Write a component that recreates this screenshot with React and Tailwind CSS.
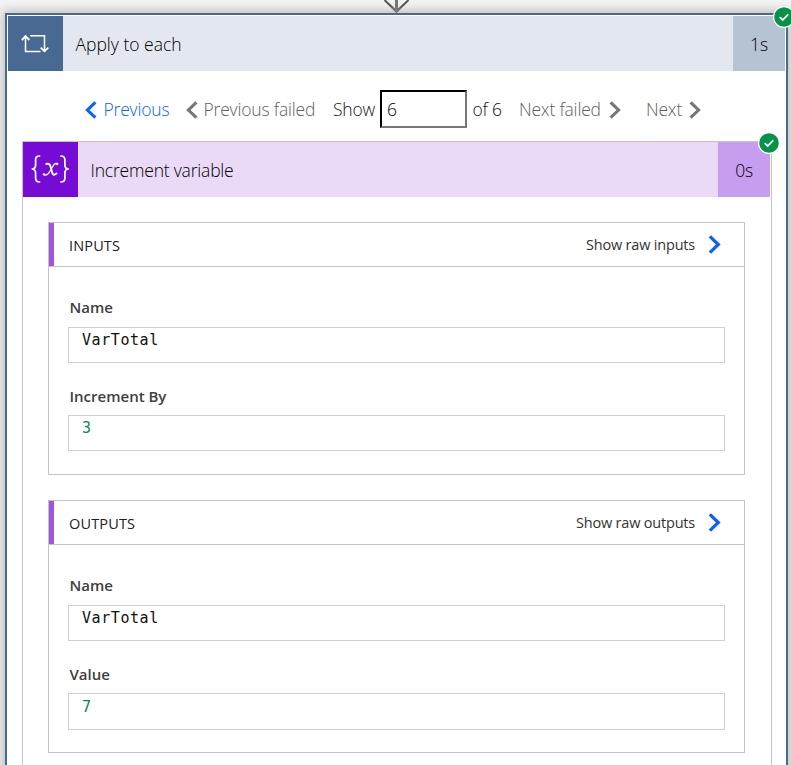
function Chevron({ left, className }) {
  return (
    <svg viewBox="0 0 12 18" className={`shrink-0 ${className}`} fill="none" stroke="currentColor" strokeWidth="3.1">
      <path d={left ? "M10.4 1.3 L2.4 9 L10.4 16.7" : "M1.6 1.3 L9.6 9 L1.6 16.7"} />
    </svg>
  );
}

function Success({ className }) {
  return (
    <svg viewBox="0 0 22 22" className={`absolute z-10 size-[22px] ${className}`}>
      <circle cx="11" cy="11" r="11" fill="#fff" />
      <circle cx="11" cy="11" r="9.8" fill="#079249" />
      <path d="M6.7 11.2 L9.7 14 L15.2 8.3" fill="none" stroke="#fff" strokeWidth="1.8" />
    </svg>
  );
}

function LoopIcon() {
  return (
    <svg viewBox="0 0 28 20" className="relative right-px h-5 w-7" fill="none" stroke="#fff" strokeWidth="1.5">
      <path d="M4.5 2.5 V17.5 H19.5" />
      <path d="M0.9 6 L4.5 2.2 L8.3 6" strokeWidth="1.9" />
      <path d="M9 1.8 H23.5 V16.5" />
      <path d="M19.7 13.6 L23.5 17.1 L27.3 13.6" strokeWidth="1.9" />
    </svg>
  );
}

function VariableIcon() {
  return (
    <svg viewBox="0 0 40 28" className="relative right-px bottom-px h-7 w-10" fill="none" stroke="#fff" strokeLinecap="round">
      <path d="M9.6 1 C6.2 1 5.6 2.4 5.6 5 V10 C5.6 12.8 4.6 14 1.6 14 C4.6 14 5.6 15.2 5.6 18 V23 C5.6 25.6 6.2 27 9.6 27" strokeWidth="1.7" />
      <path d="M30.9 1 C34.3 1 34.9 2.4 34.9 5 V10 C34.9 12.8 35.9 14 38.9 14 C35.9 14 34.9 15.2 34.9 18 V23 C34.9 25.6 34.3 27 30.9 27" strokeWidth="1.7" />
      <path d="M16.3 9 C20.5 7.5 20.5 12 21.5 15 C22.4 18.6 22.8 21.5 26.5 18.5" strokeWidth="1.9" />
      <path d="M27.5 8.6 C24.5 7.3 22.8 11 21 14.5 C19 18.5 16.5 21.5 13.5 19.6" strokeWidth="1.2" />
      <circle cx="27" cy="9" r=".9" fill="#fff" strokeWidth=".6" />
      <circle cx="14" cy="19.3" r=".9" fill="#fff" strokeWidth=".6" />
    </svg>
  );
}

function Field({ label, value, numeric, className, boxClass }) {
  return (
    <div className={className}>
      <div className="h-5 pl-[1.5px] text-[15px] leading-5 font-semibold whitespace-nowrap text-[#404040]">{label}</div>
      <div
        className={`border border-[#d0d0d0] pl-[13px] font-['DejaVu_Sans_Mono',monospace] text-[15px] tracking-[0.57px] ${boxClass} ${numeric ? "text-[#098658]" : "text-[#111]"}`}
      >
        {value}
      </div>
    </div>
  );
}

function Section({ title, link, children, className }) {
  return (
    <section className={`h-[253px] border border-[#c4c4c4] ${className}`}>
      <div className="flex h-11 items-center border-b border-[#c4c4c4] pr-[23px] text-[#333]">
        <div className="h-[43px] w-[5px] bg-[#a055dd]" />
        <div className="ml-[15px] grow pt-0.5 text-[14.5px] font-medium tracking-[0.15px] text-[#222]">{title}</div>
        <div className="text-[14.5px] tracking-[-0.2px]">{link}</div>
        <Chevron className="ml-[13px] h-[19px] w-[13px] text-[#0b62f5]" />
      </div>
      <div className="px-[19px]">{children}</div>
    </section>
  );
}

export default function App() {
  return (
    <div className="relative h-[765px] w-[791px] overflow-hidden bg-[#f3f4f3] pt-[13px] pl-[5px] font-['Open_Sans','Noto_Sans',sans-serif]">
      <svg viewBox="0 0 28 14" className="absolute top-0 left-[383px] z-10 h-3.5 w-7">
        <path d="M1.5 0 L13.5 11.5 L25.5 0" fill="none" stroke="#555" strokeWidth="2" />
        <path d="M13.5 0 V10" stroke="#777" strokeWidth="3" />
        <path d="M7.5 6.5 L13.5 10 L19.5 6.5 L13.5 13 Z" fill="#777" />
      </svg>
      <Success className="top-[6px] left-[773px]" />
      <div className="relative h-[780px] w-[783px] border-2 border-[#486991] bg-white p-px shadow-[0_0_10px_2px_#b8b8b8]">
        <header className="flex h-[55px] w-[777px] items-center bg-[#e3e8f0] text-[17.5px] font-light text-black">
          <div className="flex size-[55px] items-center justify-center bg-[#486991]"><LoopIcon /></div>
          <div className="grow pt-0.5 pl-[12.5px]">Apply to each</div>
          <div className="flex h-full w-[52px] items-center justify-center bg-[#b6c3d3] pt-0.5">1s</div>
        </header>

        <nav className="flex h-[70px] items-center pt-[7px] pl-[77px] text-[17.5px] font-light tracking-[-0.18px] whitespace-nowrap text-[#606060]">
          <div className="flex w-[101px] items-center text-[#0b62f5]">
            <Chevron left className="h-[18px] w-3" />
            <span className="ml-[6.5px]">Previous</span>
          </div>
          <div className="flex w-[147px] items-center">
            <Chevron left className="h-[18px] w-3 text-[#777]" />
            <span className="ml-[5.5px]">Previous failed</span>
          </div>
          <div className="w-[47px] text-[#111]">Show</div>
          <div className="mb-0.5 flex h-[38px] w-[87px] items-center border-2 border-t-black border-r-[#777] border-b-[#777] border-l-black pt-px pl-[5px] text-black">6</div>
          <div className="w-[52px] pl-[5.5px] text-[#111]">of 6</div>
          <div className="flex w-[127px] items-center">
            <span className="w-[90px]">Next failed</span>
            <Chevron className="h-[18px] w-3 text-[#777]" />
          </div>
          <div className="flex items-center">
            <span className="w-[43px]">Next</span>
            <Chevron className="h-[18px] w-3 text-[#777]" />
          </div>
        </nav>

        <div className="relative ml-[14px] h-[640px] w-[750px] border border-[#c4c4c4]">
          <Success className="-top-[10px] left-[735px]" />
          <header className="flex h-[55px] w-[747px] items-center bg-[#eadaf7] text-[17.5px] font-light tracking-[-0.2px] text-black">
            <div className="flex size-[55px] items-center justify-center bg-[#770bd6]"><VariableIcon /></div>
            <div className="grow pt-0.5 pl-[12.5px]">Increment variable</div>
            <div className="flex h-full w-[52px] items-center justify-center bg-[#c79eef] pt-0.5">0s</div>
          </header>
          <div className="flex flex-col gap-[25px] pt-[25px] pl-[25px]">
            <Section title="INPUTS" link="Show raw inputs" className="w-[697px]">
              <Field label="Name" value="VarTotal" className="pt-[30px]" boxClass="mt-[10px] h-9 leading-[25px]" />
              <Field label="Increment By" value="3" numeric className="pt-[23px]" boxClass="mt-[9px] h-9 leading-[25px]" />
            </Section>
            <Section title="OUTPUTS" link="Show raw outputs" className="w-[697px]">
              <Field label="Name" value="VarTotal" className="pt-[30px]" boxClass="mt-[10px] h-9 leading-[25px]" />
              <Field label="Value" value="7" numeric className="pt-[23px]" boxClass="mt-[9px] h-[37px] leading-[27px]" />
            </Section>
          </div>
        </div>
      </div>
    </div>
  );
}
